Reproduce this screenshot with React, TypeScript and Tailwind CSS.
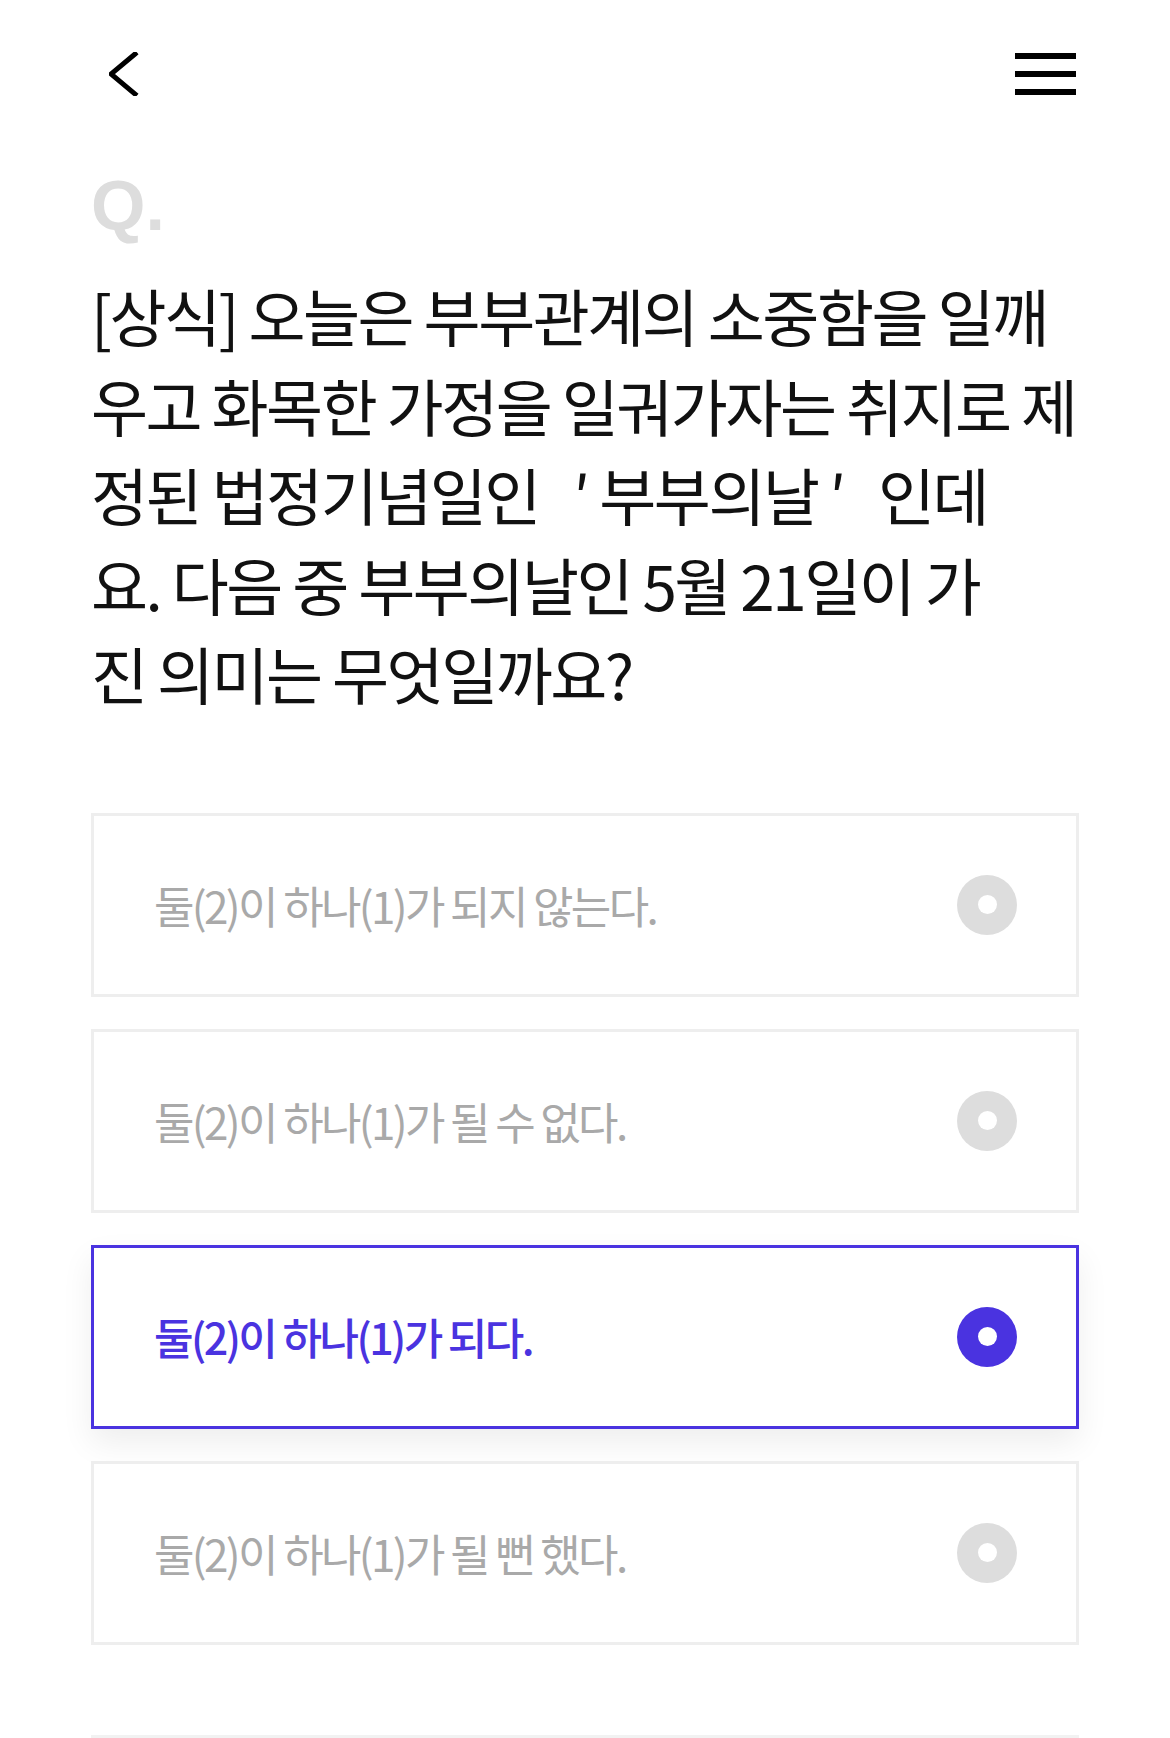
import React from "react";

interface QuizOption {
  label: string;
  selected?: boolean;
}

const options: QuizOption[] = [
  { label: "둘(2)이 하나(1)가 되지 않는다." },
  { label: "둘(2)이 하나(1)가 될 수 없다." },
  { label: "둘(2)이 하나(1)가 되다.", selected: true },
  { label: "둘(2)이 하나(1)가 될 뻔 했다." },
];

const questionLines = [
  "[상식] 오늘은 부부관계의 소중함을 일깨",
  "우고 화목한 가정을 일궈가자는 취지로 제",
  "정된 법정기념일인   ′ 부부의날 ′   인데",
  "요. 다음 중 부부의날인 5월 21일이 가",
  "진 의미는 무엇일까요?",
];

const font = {
  fontFamily: '"Noto Sans CJK KR", "Noto Sans", sans-serif',
};

const OptionCard = ({ option }: { option: QuizOption }) => {
  return (
    <div
      className={
        option.selected
          ? "flex h-[184px] items-center justify-between border-[3px] border-[#4a33e0] bg-white pl-[60px] pr-[59px] shadow-[0_14px_30px_rgba(0,0,0,0.07)]"
          : "flex h-[184px] items-center justify-between border-[3px] border-[#eeeeee] bg-white pl-[60px] pr-[59px]"
      }
    >
      <span
        className={
          option.selected
            ? "text-[43px] font-medium tracking-[-0.06em] text-[#4a33e0]"
            : "text-[44px] font-normal tracking-[-0.06em] text-[#a9a9a9]"
        }
      >
        {option.label}
      </span>
      <span
        className={
          option.selected
            ? "flex h-[60px] w-[60px] items-center justify-center rounded-full bg-[#4a33e0]"
            : "flex h-[60px] w-[60px] items-center justify-center rounded-full bg-[#dddddd]"
        }
      >
        <span className="h-[19px] w-[19px] rounded-full bg-white"></span>
      </span>
    </div>
  );
};

const App = () => {
  return (
    <div className="min-h-screen bg-white" style={font}>
      <div className="px-[91px]">
        <header className="mt-[52px] flex h-[44px] items-center justify-between">
          <svg
            className="ml-[18px]"
            width="30"
            height="44"
            viewBox="0 0 30 44"
            fill="none"
          >
            <polyline
              points="26,2 2,22 26,42"
              stroke="#000"
              strokeWidth="5"
              strokeLinecap="square"
              strokeLinejoin="miter"
            />
          </svg>
          <div className="mr-[3px] flex flex-col gap-[12px]">
            <span className="block h-[6px] w-[61px] bg-black"></span>
            <span className="block h-[6px] w-[61px] bg-black"></span>
            <span className="block h-[6px] w-[61px] bg-black"></span>
          </div>
        </header>

        <div
          className="mt-[75px] h-[70px] text-[70px] font-bold leading-none text-[#dddddd]"
          style={{ fontFamily: '"Liberation Sans", Arial, sans-serif' }}
        >
          Q.
        </div>

        <p className="mt-[30px] text-[62px] font-normal leading-[89.5px] tracking-[-0.04em] text-[#111111]">
          {questionLines.map((line, index) => (
            <span key={index} className="block whitespace-pre">
              {line}
            </span>
          ))}
        </p>

        <ul className="mt-[94px] flex flex-col gap-[32px]">
          {options.map((option, index) => (
            <li key={index}>
              <OptionCard option={option} />
            </li>
          ))}
        </ul>

        <div className="mt-[90px] h-[3px] bg-[#f2f2f2]"></div>
      </div>
    </div>
  );
};

export default App;
